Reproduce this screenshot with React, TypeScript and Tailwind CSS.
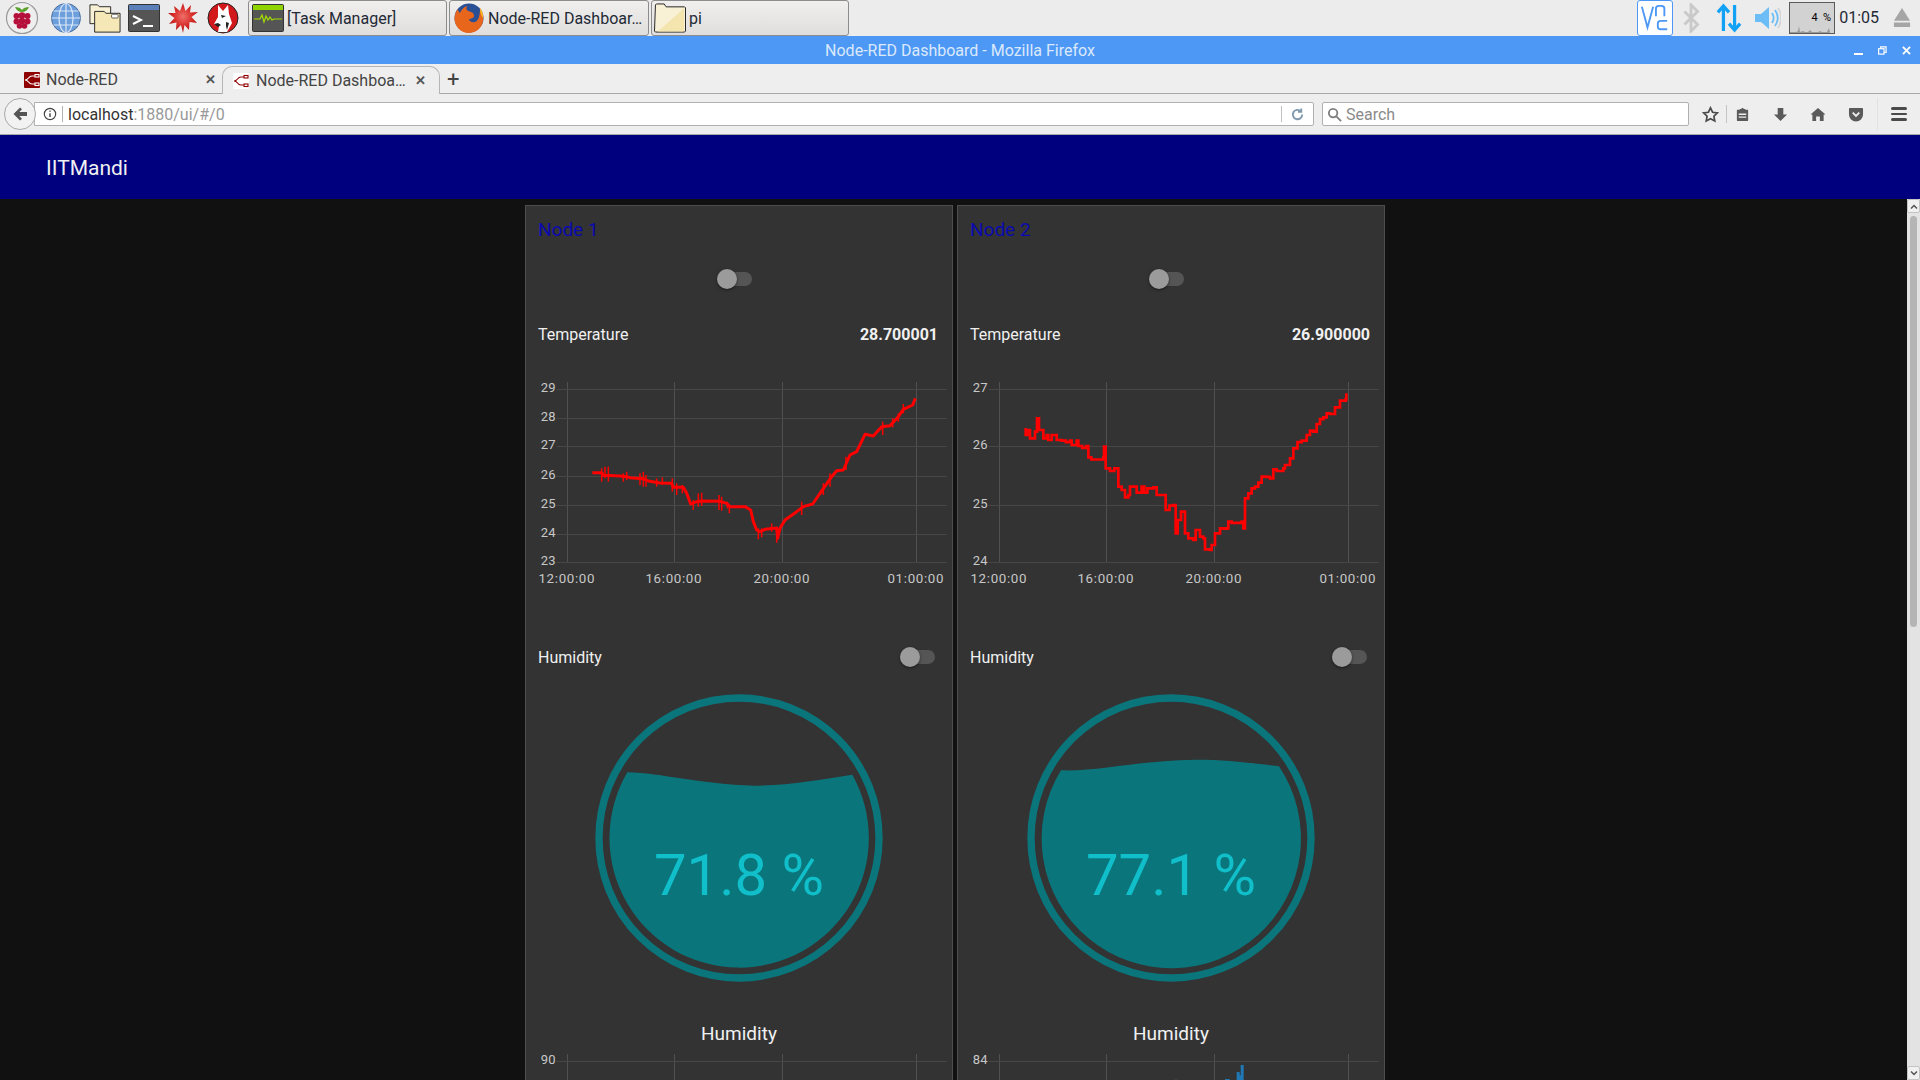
import { ReactNode } from "react";

const roboto = "font-['Roboto',sans-serif]";

// wobbly temperature trace, in 3x crop coordinates
const trace1 =
  "217,818 245,818 250,826 300,828 320,830 330,833 370,836 385,843 420,849 455,850 460,862 490,862 500,880 512,912 530,905 545,903 600,904 620,910 630,920 675,920 692,930 700,965 710,990 720,995 735,988 770,984 773,1015 780,985 795,960 830,935 850,920 878,912 900,880 935,830 950,812 970,810 990,765 1010,755 1035,703 1060,708 1085,680 1110,677 1135,650 1150,628 1178,615 1186,595";

const spikes1 = [
  [245, 805, 845], [255, 800, 835], [265, 800, 845], [310, 820, 845], [320, 815, 840], [360, 820, 855],
  [370, 815, 860], [378, 825, 860], [410, 835, 860], [427, 832, 855], [457, 835, 875], [470, 850, 885],
  [487, 855, 880], [520, 900, 930], [535, 880, 920], [545, 878, 918], [597, 885, 930], [605, 890, 932],
  [622, 905, 925], [628, 915, 940], [715, 985, 1018], [725, 985, 1012], [755, 970, 995], [770, 1000, 1028],
  [845, 905, 945], [910, 850, 885], [930, 820, 860], [978, 770, 810], [1088, 665, 705], [1118, 655, 682],
  [1135, 640, 665], [1150, 612, 640],
];

const trace2 =
  "208,688 212,705 218,690 225,715 235,715 240,695 246,655 252,690 265,715 275,705 280,720 290,705 300,705 305,720 320,722 345,722 350,735 365,722 370,738 393,738 400,772 445,772 447,740 452,805 478,805 490,860 500,870 510,892 520,885 525,860 540,860 545,878 560,860 568,878 595,862 605,885 620,885 632,930 655,915 662,1000 668,960 678,935 690,1000 700,1015 715,1020 722,990 735,1010 745,1015 750,1048 765,1050 770,1035 780,1000 795,985 815,985 820,965 860,965 865,985 870,895 880,880 900,860 920,830 945,835 955,808 985,805 990,795 1005,775 1015,745 1040,722 1055,705 1075,695 1085,672 1105,652 1125,642 1140,622 1155,602 1172,598 1174,580";

function stair(points: string) {
  const pts = points.split(" ").map((p) => p.split(",").map(Number));
  const step = 17.3;
  let d = `M${pts[0][0]} ${pts[0][1]}`;
  for (let i = 1; i < pts.length; i++) {
    const [x0, y0] = pts[i - 1];
    const [x1, y1] = pts[i];
    const n = Math.max(1, Math.floor((x1 - x0) / 9));
    for (let k = 1; k <= n; k++) {
      const x = x0 + ((x1 - x0) * k) / n;
      const y = y0 + ((y1 - y0) * k) / n;
      d += ` H${x.toFixed(1)} V${k === n ? y : Math.round(y / step) * step}`;
    }
  }
  return d;
}

const gridX = [127.5, 448.5, 772.5, 1174.5];

function Chart({ ys, labels, children }: { ys: number[]; labels: string[]; children: ReactNode }) {
  const times = ["12:00:00", "16:00:00", "20:00:00", "01:00:00"];
  return (
    <svg viewBox="0 0 1284 645" className="block h-[215px] w-[428px]">
      {gridX.map((x) => (
        <line key={x} x1={x} x2={x} y1="21" y2="564" stroke="#505050" strokeWidth="3" />
      ))}
      {ys.map((y) => (
        <line key={y} x1="95" x2="1266" y1={y} y2={y} stroke="#474747" strokeWidth="3" />
      ))}
      {labels.map((t, i) => (
        <text key={t} x="93" y={ys[i] + 7} textAnchor="end" fontFamily="Roboto, sans-serif" fontSize="39" letterSpacing="1" fill="#c8c8c8">
          {t}
        </text>
      ))}
      {times.map((t, i) => (
        <text key={t} x={gridX[i] - 2} y="624" textAnchor="middle" fontFamily="Roboto, sans-serif" fontSize="40" letterSpacing="2" fill="#c8c8c8">
          {t}
        </text>
      ))}
      {children}
    </svg>
  );
}

function Toggle({ className }: { className: string }) {
  return (
    <div className={`relative h-[14px] w-[35px] rounded-full bg-[#555] ${className}`}>
      <div className="absolute -top-[3px] left-0 h-5 w-5 rounded-full bg-[#9b9b9b] shadow-[0_1px_3px_rgba(0,0,0,0.5)]" />
    </div>
  );
}

// fill path is in crop coordinates, shift moves it onto the 870 box
function Gauge({ fill, value, shift }: { fill: string; value: string; shift: string }) {
  return (
    <svg viewBox="0 0 870 870" className="block h-[290px] w-[290px]">
      <circle cx="435" cy="435" r="420" fill="none" stroke="#0a767c" strokeWidth="22" />
      <path d={fill} fill="#0a767c" transform={shift} />
      <text x="435" y="607" textAnchor="middle" fontFamily="Roboto, sans-serif" fontWeight="400" fontSize="174" fill="#10bfca">
        {value}
      </text>
    </svg>
  );
}

function Card({
  title,
  value,
  chart,
  gauge,
  shift,
  gaugeValue,
  tick,
  bars,
}: {
  title: string;
  value: string;
  chart: ReactNode;
  gauge: string;
  shift: string;
  gaugeValue: string;
  tick: string;
  bars?: ReactNode;
}) {
  return (
    <div className="h-[900px] w-[428px] shrink-0 border border-[#4d4d4d] bg-[#333333]">
      <div className="pl-[12px] pt-[10px] text-[19px] leading-[28px] text-[#0a0ab0]">{title}</div>
      <div className="flex justify-center pr-[10px] pt-[25px]">
        <Toggle className="mt-[3px]" />
      </div>
      <div className="flex justify-between pl-[12px] pr-[14px] pt-[37px] text-[16px] leading-[24px] text-[#f0f0f0]">
        <span>Temperature</span>
        <span className="font-bold">{value}</span>
      </div>
      <div className="-ml-px mt-[28px]">{chart}</div>
      <div className="mt-[55px] flex h-[24px] items-center justify-between pl-[12px] pr-[17px] text-[16px] leading-[22px] text-[#f0f0f0]">
        <span className="pt-[2px]">Humidity</span>
        <Toggle className="mt-0" />
      </div>
      <div className="mt-[24px] flex justify-center pr-[1px]">
        <Gauge fill={gauge} value={gaugeValue} shift={shift} />
      </div>
      <div className="mt-[37px] text-center text-[19px] leading-[28px] text-[#f0f0f0]">Humidity</div>
      <svg viewBox="0 0 1284 120" className="-ml-px -mt-px block h-[40px] w-[428px]">
        {gridX.map((x) => (
          <line key={x} x1={x} x2={x} y1="21" y2="120" stroke="#505050" strokeWidth="3" />
        ))}
        <line x1="95" x2="1266" y1="43.500" y2="43.500" stroke="#474747" strokeWidth="3" />
        <text x="93" y="50" textAnchor="end" fontFamily="Roboto, sans-serif" fontSize="39" letterSpacing="1" fill="#c8c8c8">
          {tick}
        </text>
        {bars}
      </svg>
    </div>
  );
}

function TaskButton({ icon, label, className }: { icon: ReactNode; label: string; className: string }) {
  return (
    <div
      className={`flex h-[36px] items-center gap-[3px] rounded-[3px] border border-[#8c8c8c] bg-gradient-to-b from-[#f0efee] to-[#dfdedd] pl-[3px] text-[16px] text-[#1f2a36] ${className}`}
    >
      {icon}
      <span className="whitespace-nowrap pt-[1px]">{label}</span>
    </div>
  );
}

const Raspberry = () => (
  <svg viewBox="0 0 36 36" className="h-[36px] w-[36px]">
    <circle cx="18" cy="18" r="15.500" fill="#eeeeee" stroke="#9a9a9a" strokeWidth="1.200" />
    <path d="M11 7c3 0 6 1 7 3 1-2 4-3 7-3-1 3-4 5-7 5s-6-2-7-5z" fill="#5aa02c" />
    <circle cx="18" cy="15.500" r="3.300" fill="#b5103c" />
    <circle cx="12.500" cy="16" r="3" fill="#b5103c" />
    <circle cx="23.500" cy="16" r="3" fill="#b5103c" />
    <circle cx="18" cy="21" r="3.300" fill="#b5103c" />
    <circle cx="12.500" cy="21.500" r="3" fill="#b5103c" />
    <circle cx="23.500" cy="21.500" r="3" fill="#b5103c" />
    <circle cx="15.500" cy="26" r="2.800" fill="#b5103c" />
    <circle cx="20.500" cy="26" r="2.800" fill="#b5103c" />
  </svg>
);

const Globe = () => (
  <svg viewBox="0 0 32 32" className="h-[32px] w-[32px]" fill="none">
    <circle cx="16" cy="16" r="14.500" fill="#6c9fdc" stroke="#4a6f9e" />
    <g stroke="#dbe8f7" strokeWidth="1.200">
      <ellipse cx="16" cy="16" rx="7" ry="14.500" />
      <path d="M16 1.500v29M1.500 16h29M3.500 9h25M3.500 23h25" />
    </g>
  </svg>
);

const Folders = () => (
  <svg viewBox="0 0 34 32" className="h-[32px] w-[32px]">
    <path d="M1 2h8l2 2h12v18H1z" fill="#f8f1d6" stroke="#222" />
    <path d="M6 9h10l2 2h15v20H6z" fill="#f6e8b6" stroke="#222" />
    <rect x="24" y="12" width="7" height="4" rx="1" fill="#fff" stroke="#333" strokeWidth="0.800" />
  </svg>
);

const Terminal = () => (
  <svg viewBox="0 0 32 28" className="h-[28px] w-[32px]">
    <rect x="0.500" y="0.500" width="31" height="27" rx="1" fill="#555" stroke="#333" />
    <rect x="1" y="1" width="30" height="5" fill="#5b7fb8" />
    <path d="M5 12l8 4-8 4" fill="none" stroke="#fff" strokeWidth="2" />
    <path d="M15 22h10" stroke="#fff" strokeWidth="2" />
  </svg>
);

const Burst = () => (
  <svg viewBox="0 0 30 30" className="h-[30px] w-[30px]">
    <defs>
      <radialGradient id="burst" cx="50%" cy="45%" r="55%">
        <stop offset="0%" stopColor="#f0706a" />
        <stop offset="60%" stopColor="#d62a26" />
        <stop offset="100%" stopColor="#a01a18" />
      </radialGradient>
    </defs>
    <polygon
      points="15,0 17.500,8 23,2 22,9.500 30,9 23.500,14 29,20 21.500,19 21,27 16.500,22 15,30 13,22 8,27 8.500,19.500 1,21 6.500,15 0,10 7.500,10 6,3 12,8"
      fill="url(#burst)"
    />
  </svg>
);

const Wolf = () => (
  <svg viewBox="0 0 32 32" className="h-[32px] w-[32px]">
    <circle cx="16" cy="16" r="15" fill="#d3181c" stroke="#222" />
    <path d="M11 3l5 6 5-6 1 9 3 9-5 9H11l1-6-5-2 4-7z" fill="#fff" />
    <path d="M7 22l4-1 3 2-3 2zM14 13l5 1-4 2zM19 20l3 1-2 7-1-4z" fill="#222" />
  </svg>
);

const Firefox = () => (
  <svg viewBox="0 0 32 32" className="h-[32px] w-[32px]">
    <circle cx="16" cy="16" r="14.500" fill="#2b4f94" />
    <path
      d="M27 6c3 4 4 9 3 13-1 7-7 12-14 12C8 31 2 25 1.500 17 1.500 13 3 9 5 7c0 2 1 3 2 4 1-3 4-6 7-7-1 2-1 4 1 5 3 1 6 1 6 5 0 2-3 3-5 3 0 2 3 4 6 3 3-1 5-5 5-14z"
      fill="#e8661c"
    />
    <path d="M27 6c3 4 3 7 3 10-2-3-3-6-3-10z" fill="#f9c32d" />
  </svg>
);

const Folder = () => (
  <svg viewBox="0 0 33 32" className="-ml-px h-[32px] w-[32px]">
    <path d="M1.500 2.500l1-1h8l2 3h19l1 1v24l-1 1h-30l-1-1z" fill="#f8f1d6" stroke="#222" />
    <path d="M4 30L31 6v23l-1 1z" fill="#f4e4ae" />
  </svg>
);

const TaskMon = () => (
  <svg viewBox="0 0 32 28" className="h-[28px] w-[32px]">
    <rect x="0.500" y="0.500" width="31" height="27" rx="1" fill="#555" stroke="#333" />
    <rect x="1" y="1" width="30" height="5" fill="#8fd400" />
    <path d="M2 15h6l2-4 2 7 2-6 2 4 2-3 2 3 2-1h8" fill="none" stroke="#a4e000" strokeWidth="1.200" />
  </svg>
);

const NodeRedIcon = ({ dark }: { dark?: boolean }) => (
  <svg viewBox="0 0 16 16" className="h-4 w-4 shrink-0">
    <rect width="16" height="16" rx="1" fill={dark ? "#8f0000" : "#ffffff"} />
    <g fill="none" stroke={dark ? "#ffffff" : "#8f0000"} strokeWidth="1.100">
      <path d="M1 8c4 0 3-4 7-4h3M1 8c4 0 3 4 7 4h3" />
      <rect x="11" y="2.500" width="4" height="2.500" />
      <rect x="11" y="11" width="4" height="2.500" />
    </g>
  </svg>
);

function App() {
  const gridY1 = [43.5, 130.5, 214.5, 304.5, 391.5, 478.5, 562.5];
  const gridY2 = [43.5, 214.5, 391.5, 562.5];

  return (
    <div className={`flex h-screen w-full flex-col overflow-hidden bg-[#111111] ${roboto}`}>
      {/* desktop panel */}
      <div className="flex h-[36px] shrink-0 items-center bg-[#edecec] text-[#1f2a36]">
        <div className="ml-[4px] flex w-[244px] items-center">
          <Raspberry />
          <span className="ml-[10px]"><Globe /></span>
          <span className="ml-[7px]"><Folders /></span>
          <span className="ml-[7px]"><Terminal /></span>
          <span className="ml-[8px]"><Burst /></span>
          <span className="ml-[9px]"><Wolf /></span>
        </div>
        <div className="flex">
          <TaskButton icon={<TaskMon />} label="[Task Manager]" className="w-[199px]" />
          <TaskButton icon={<Firefox />} label="Node-RED Dashboar…" className="ml-[2px] w-[200px]" />
          <TaskButton icon={<Folder />} label="pi" className="ml-[2px] w-[198px]" />
        </div>
        <div className="ml-auto flex items-center">
          <div className="flex h-[36px] w-[36px] items-center justify-center rounded-[3px] border border-[#4d98f5] bg-white">
            <svg viewBox="0 0 32 32" className="h-[30px] w-[30px]" fill="none" stroke="#4d98f5" strokeWidth="2">
              <path d="M2 4l6 22 6-22M17 14V6a3 3 0 0 1 3-3h3a3 3 0 0 1 3 3v8M29 19h-7a3 3 0 0 0-3 3v3a3 3 0 0 0 3 3h7" />
            </svg>
          </div>
          <svg viewBox="0 0 20 32" className="ml-[8px] h-[30px] w-[20px]" fill="none" stroke="#c9c9c9" strokeWidth="3">
            <path d="M3 9l14 14-7 7V2l7 7-14 14" />
          </svg>
          <svg viewBox="0 0 28 32" className="ml-[15px] h-[30px] w-[26px]" fill="none" stroke="#12a2f5" strokeWidth="3.500">
            <path d="M8 30V3M2 10l6-7 6 7M20 2v27M14 22l6 7 6-7" />
          </svg>
          <svg viewBox="0 0 28 28" className="ml-[11px] h-[28px] w-[28px]">
            <path d="M2 10h6l8-7v22l-8-7H2z" fill="#6cbdf5" />
            <path d="M19 9c2 3 2 7 0 10M22 6c3.500 5 3.500 11 0 16" fill="none" stroke="#6cbdf5" strokeWidth="1.800" />
            <path d="M25 4c4 6 4 14 0 20" fill="none" stroke="#d5d5d5" strokeWidth="1.800" />
          </svg>
          <div className="relative ml-[8px] h-[32px] w-[46px] border border-[#5a5a5a] bg-[#d2d2d2] text-right text-[11px] leading-[30px] text-black">
            <span className="whitespace-pre pr-[3px]">4  %</span>
            <svg viewBox="0 0 44 8" className="absolute bottom-0 left-0 h-[8px] w-[44px]">
              <path d="M0 8V7h6l2-1 1-5 1 6 3-1 2 1h3l2-2 2 2h6l2-1 2 1h5l2-4 1 4v1z" fill="#9a9a9a" />
            </svg>
          </div>
          <span className="ml-[4px] text-[16px]">01:05</span>
          <svg viewBox="0 0 20 24" className="ml-[14px] mr-[9px] h-[24px] w-[18px]" fill="#a5a5a5">
            <path d="M10 1l9 14H1z" />
            <rect x="1" y="17" width="18" height="5" />
          </svg>
        </div>
      </div>

      {/* window title */}
      <div className="flex h-[28px] shrink-0 items-center bg-[#4d98f5] text-[16px] text-[#dbe9fb]">
        <span className="flex-1 pl-[66px] pt-[2px] text-center">Node-RED Dashboard - Mozilla Firefox</span>
        <div className="mr-[9px] flex items-center gap-[15px]">
          <span className="mt-[8px] h-[2px] w-[9px] bg-white" />
          <svg viewBox="0 0 10 10" className="h-[9px] w-[9px]" fill="none" stroke="#fff" strokeWidth="1.300">
            <rect x="0.700" y="3" width="6" height="6" />
            <path d="M3 3V1h6v6H7" />
          </svg>
          <svg viewBox="0 0 10 10" className="h-[9px] w-[9px]" stroke="#fff" strokeWidth="2">
            <path d="M1 1l8 8M9 1l-8 8" />
          </svg>
        </div>
      </div>

      {/* tab strip */}
      <div className="flex h-[30px] shrink-0 items-end border-b border-[#a9a9a9] bg-[#eeeeee] text-[16px] text-[#444]">
        <div className="flex h-[29px] w-[222px] items-center pl-[24px] pt-[2px]">
          <NodeRedIcon dark />
          <span className="ml-[6px]">Node-RED</span>
          <span className="ml-auto mr-[6px] text-[13px] font-bold text-[#555]">✕</span>
        </div>
        <div className="relative -mb-px flex h-[28px] w-[218px] items-center rounded-t-[10px] border border-b-0 border-[#b5b5b5] bg-[#eeeeee] pl-[10px]">
          <NodeRedIcon />
          <span className="ml-[7px] whitespace-nowrap">Node-RED Dashboa…</span>
          <span className="ml-auto mr-[13px] text-[13px] font-bold text-[#555]">✕</span>
        </div>
        <span className="mb-[2px] ml-[7px] text-[22px] leading-none text-[#444]">+</span>
      </div>

      {/* nav bar */}
      <div className="flex h-[41px] shrink-0 items-center border-b border-[#a9a9a9] bg-[#eeeeee] pl-[4px]">
        <div className="z-10 flex h-[32px] w-[32px] items-center justify-center rounded-full border border-[#a9a9a9] bg-[#f2f2f2]">
          <svg viewBox="0 0 16 16" className="h-4 w-4" fill="#555">
            <path d="M8 1.500L1.500 8 8 14.500l2-1.800L7.300 10H15V6H7.300L10 3.300z" />
          </svg>
        </div>
        <div className="-ml-[2px] flex h-[24px] w-[1280px] items-center rounded-r-[2px] border border-[#b0b0b0] bg-white text-[16px]">
          <svg viewBox="0 0 16 16" className="ml-[8px] h-[14px] w-[14px]" fill="none" stroke="#444" strokeWidth="1.300">
            <circle cx="8" cy="8" r="6.500" />
            <path d="M8 7v4.500M8 4v1.500" strokeWidth="1.600" />
          </svg>
          <span className="ml-[5px] h-[16px] w-px bg-[#b0b0b0]" />
          <span className="ml-[5px] pt-[2px] text-[#333]">localhost</span>
          <span className="pt-[2px] text-[#999]">:1880/ui/#/0</span>
          <span className="ml-auto h-[16px] w-px bg-[#c0c0c0]" />
          <svg viewBox="0 0 16 16" className="mx-[8px] h-[15px] w-[15px]" fill="none" stroke="#7f98ad" strokeWidth="2">
            <path d="M13 8a5 5 0 1 1-1.500-3.500" />
            <path d="M12 1.500v3.500H8.500" />
          </svg>
        </div>
        <div className="ml-[8px] flex h-[24px] w-[367px] items-center rounded-[2px] border border-[#b0b0b0] bg-white pl-[4px] text-[16px] text-[#8a8a8a]">
          <svg viewBox="0 0 16 16" className="h-[15px] w-[15px]" fill="none" stroke="#808080" strokeWidth="2">
            <circle cx="6.500" cy="6.500" r="4.500" />
            <path d="M10 10l5 5" />
          </svg>
          <span className="ml-[4px] pt-[2px]">Search</span>
        </div>
        <div className="ml-[13px] flex items-center text-[#555]">
          <svg viewBox="0 0 18 18" className="h-[17px] w-[17px]" fill="none" stroke="#4a4a4a" strokeWidth="1.800">
            <path d="M9 2l2.200 4.600 5 .7-3.600 3.500.9 5L9 13.400 4.500 15.800l.9-5L1.800 7.300l5-.7z" />
          </svg>
          <span className="ml-[7px] h-[18px] w-px bg-[#c4c4c4]" />
          <svg viewBox="0 0 16 16" className="ml-[8px] h-[15px] w-[15px]" fill="#5a5a5a">
            <path d="M5 2h2V1h2v1h2v1h2.500l.5.500v11l-.5.500h-11l-.5-.500v-11l.5-.500H5zM4 7v1.500h8V7zm0 3v1.500h8V10z" />
          </svg>
          <svg viewBox="0 0 16 16" className="ml-[23px] h-[15px] w-[15px]" fill="#5a5a5a">
            <path d="M5 1h6v7h4l-7 7-7-7h4z" />
          </svg>
          <svg viewBox="0 0 16 16" className="ml-[22px] h-[15px] w-[16px]" fill="#5a5a5a">
            <path d="M8 1l8 7h-2v7h-4v-5H6v5H2V8H0z" />
          </svg>
          <svg viewBox="0 0 16 16" className="ml-[22px] h-[15px] w-[16px]">
            <path d="M1.500 1h13a1 1 0 0 1 1 1v6a7.500 7.500 0 0 1-15 0V2a1 1 0 0 1 1-1z" fill="#5a5a5a" />
            <path d="M4.500 6L8 9.500 11.500 6" fill="none" stroke="#eeeeee" strokeWidth="2" />
          </svg>
          <span className="ml-[13px] h-[32px] w-px bg-[#e2e2e2]" />
          <div className="ml-[13px] flex w-[16px] flex-col gap-[3px]">
            <span className="h-[2.500px] rounded bg-[#4a4a4a]" />
            <span className="h-[2.500px] rounded bg-[#4a4a4a]" />
            <span className="h-[2.500px] rounded bg-[#4a4a4a]" />
          </div>
        </div>
      </div>

      {/* dashboard toolbar */}
      <div className="flex h-[64px] shrink-0 items-center bg-[#00007f] pl-[46px] pt-[3px] text-[21px] text-[#f0f0f0]">IITMandi</div>

      {/* dashboard content */}
      <div className="flex min-h-0 flex-1">
        <div className="flex min-w-0 flex-1 justify-center gap-[4px] overflow-hidden pl-[3px] pt-[6px]">
          <Card
            title="Node 1"
            value="28.700001"
            gauge="M320 396C420 398 540 432 700 436C800 436 900 418 995 403A389 389 0 1 1 320 396Z"
            shift="translate(-220 -158)"
            gaugeValue="71.8 %"
            tick="90"
            chart={
              <Chart ys={gridY1} labels={["29", "28", "27", "26", "25", "24", "23"]}>
                <g transform="translate(-15 -525)" fill="none" stroke="#ff0000">
                  <polyline points={trace1} strokeWidth="9" strokeLinejoin="round" />
                  {spikes1.map(([x, a, b]) => (
                    <line key={x} x1={x} x2={x} y1={a} y2={b} strokeWidth="4.500" />
                  ))}
                </g>
              </Chart>
            }
          />
          <Card
            title="Node 2"
            value="26.900000"
            gauge="M316 390C420 395 550 360 720 358C820 358 900 370 970 378A389 389 0 1 1 316 390Z"
            shift="translate(-211 -158)"
            gaugeValue="77.1 %"
            tick="84"
            bars={<path d="M654 120v-22h6v22zM804 120V96h14v24zM839 120V75h9v10h3V54h9v66z" fill="#1f77b4" />}
            chart={
              <Chart ys={gridY2} labels={["27", "26", "25", "24"]}>
                <g transform="translate(-6 -525)">
                  <path d={stair(trace2)} fill="none" stroke="#ff0000" strokeWidth="8" />
                </g>
              </Chart>
            }
          />
        </div>

        {/* scrollbar */}
        <div className="flex w-[13px] shrink-0 flex-col items-center bg-[#e3e3e3]">
          <div className="flex h-[14px] w-[13px] items-center justify-center rounded-[2px] border border-[#c4c4c4] bg-[#f0f0f0]">
            <svg viewBox="0 0 8 5" className="h-[5px] w-[8px]" fill="none" stroke="#555" strokeWidth="1.500">
              <path d="M1 4.500l3-3 3 3" />
            </svg>
          </div>
          <div className="mt-[3px] h-[411px] w-[7px] rounded-full bg-[#b5b5b5]" />
          <div className="mt-auto flex h-[14px] w-[13px] items-center justify-center rounded-[2px] border border-[#c4c4c4] bg-[#f0f0f0]">
            <svg viewBox="0 0 8 5" className="h-[5px] w-[8px]" fill="none" stroke="#555" strokeWidth="1.500">
              <path d="M1 .5l3 3 3-3" />
            </svg>
          </div>
        </div>
      </div>
    </div>
  );
}

export default App;
